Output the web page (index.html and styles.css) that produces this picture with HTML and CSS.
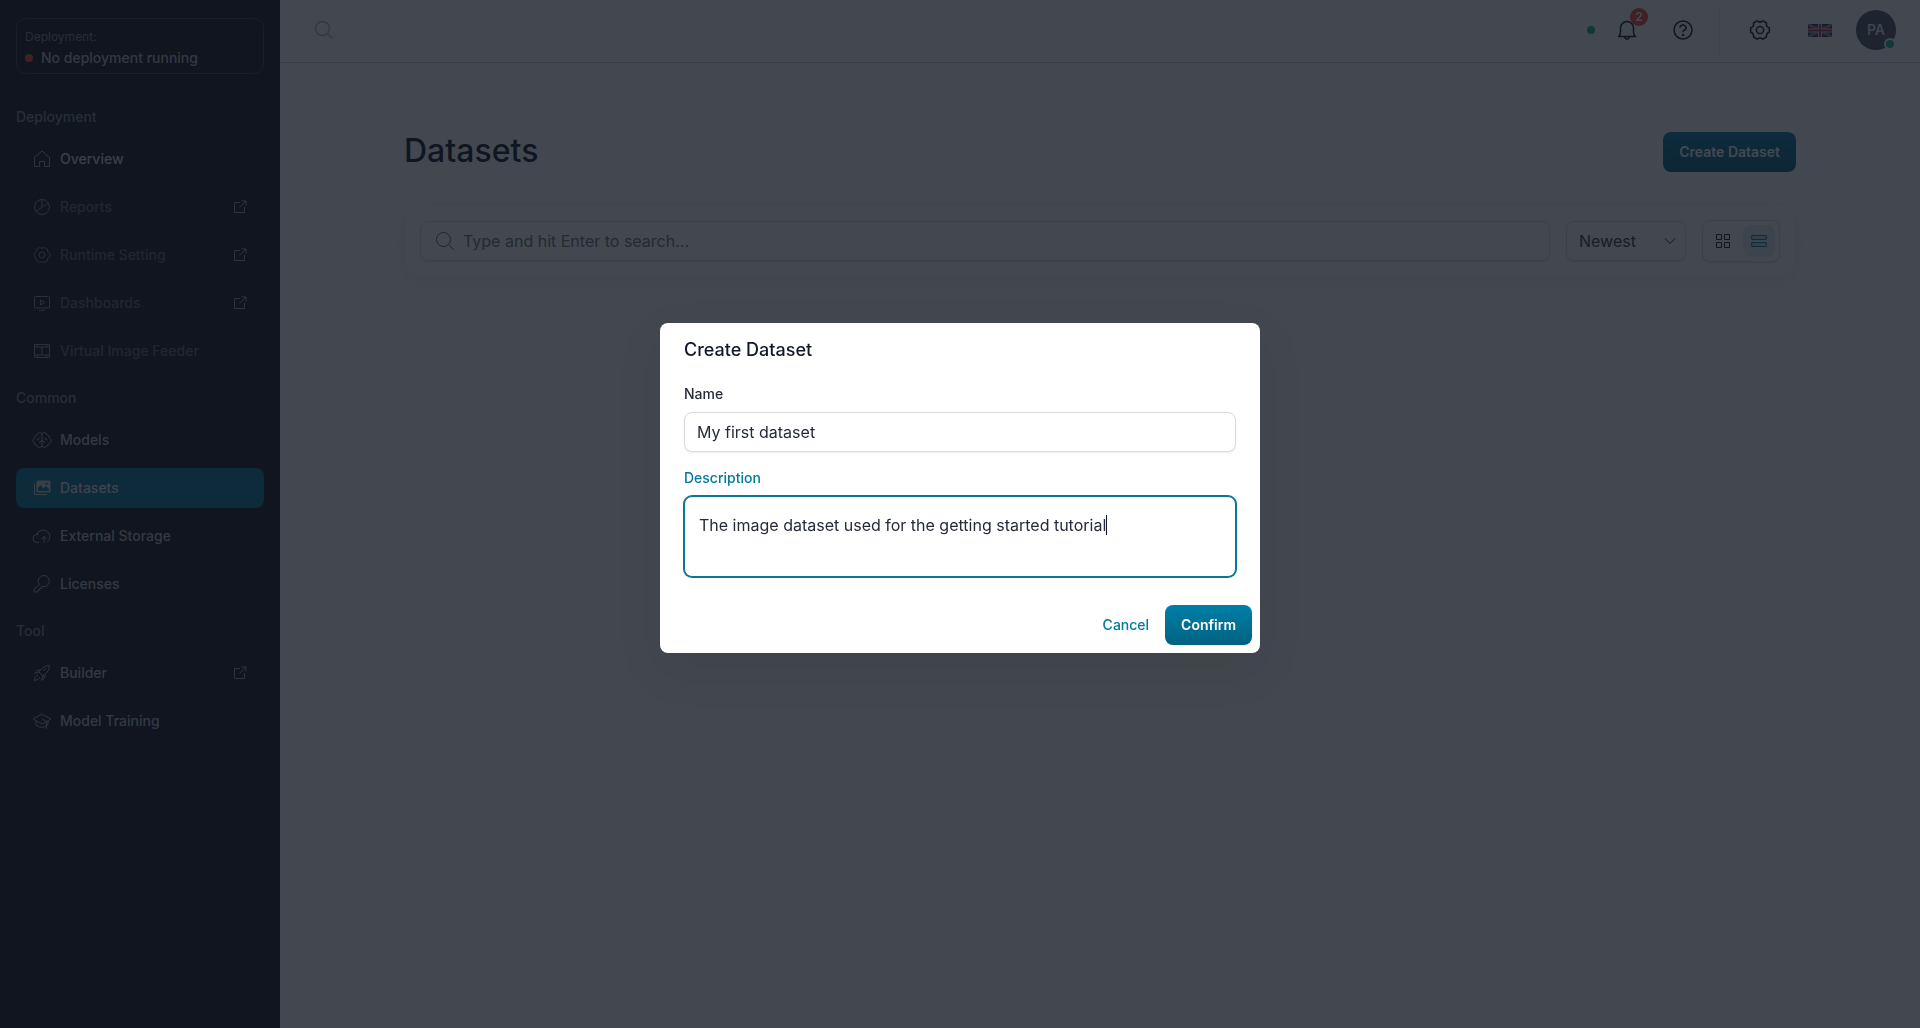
FILE: index.html
```
<!DOCTYPE html>
<html lang="en">
<head>
    <meta charset="UTF-8">
    <meta name="viewport" content="width=device-width, initial-scale=1.0">
    <title>Datasets</title>
    <link rel="stylesheet" href="styles.css">
</head>
<body>
    <svg class="sprite" aria-hidden="true">
        <symbol id="icon-external" viewBox="0 0 14 14">
            <path d="M6 2.500H.5v10h10V7M7.500 1h4.500v4.500M12 1L5.500 7.500"/>
        </symbol>
        <symbol id="icon-search" viewBox="0 0 20 20">
            <circle cx="8.500" cy="8.500" r="7"/>
            <path d="M13.500 13.500l5 5"/>
        </symbol>
        <symbol id="icon-gear" viewBox="-2 -2 24 24">
            <path d="M19.350 7.840V12.160Q15.700 13.300 16.550 17.020L12.810 19.180Q10 16.600 7.190 19.180L3.450 17.020Q4.300 13.300 .65 12.160V7.840Q4.300 6.700 3.450 2.980L7.190 .82Q10 3.400 12.810 .82L16.550 2.980Q15.700 6.700 19.350 7.840Z"/>
            <circle cx="10" cy="10" r="3.600"/>
        </symbol>
    </svg>

    <div class="app">
        <aside class="sidebar">
            <div class="deployment">
                <span class="deployment-label">Deployment:</span>
                <span class="deployment-status"><i class="dot red"></i>No deployment running</span>
            </div>
            <nav>
                <h2 class="nav-title">Deployment</h2>
                <a class="nav-item bright" href="#">
                    <svg class="icon" viewBox="0 0 20 20"><path d="M2.500 8.500L10 2l7.500 6.500V17.500h-5v-5h-5v5h-5z"/></svg>
                    <span>Overview</span>
                </a>
                <a class="nav-item disabled" href="#">
                    <svg class="icon" viewBox="0 0 20 20"><circle cx="10" cy="10" r="7.500"/><path d="M10 2.500V10l-5.700 4.500M10 10l6.500-4"/></svg>
                    <span>Reports</span>
                    <svg class="external"><use href="#icon-external"/></svg>
                </a>
                <a class="nav-item disabled" href="#">
                    <svg class="icon"><use href="#icon-gear"/></svg>
                    <span>Runtime Setting</span>
                    <svg class="external"><use href="#icon-external"/></svg>
                </a>
                <a class="nav-item disabled" href="#">
                    <svg class="icon" viewBox="0 0 20 20"><rect x="2.500" y="3.500" width="15" height="11.500" rx="1"/><path d="M7 17.500h6M8.500 7v5l4-2.500z"/></svg>
                    <span>Dashboards</span>
                    <svg class="external"><use href="#icon-external"/></svg>
                </a>
                <a class="nav-item disabled" href="#">
                    <svg class="icon" viewBox="0 0 20 20"><path d="M2.500 3.500h15v13h-15zM2.500 6h15M2.500 14h15M10 6v8M5.500 3.500V6M14.500 3.500V6M5.500 14v2.500M14.500 14v2.500"/></svg>
                    <span>Virtual Image Feeder</span>
                </a>

                <h2 class="nav-title">Common</h2>
                <a class="nav-item" href="#">
                    <svg class="icon" viewBox="0 0 20 20"><path d="M10 4.500Q9.500 2.500 7.500 2.500T5 5Q2.500 5 2.500 8Q.8 9 .8 10.500T2.500 13Q2.500 15.500 5 15.500Q5.500 17.500 7.500 17.500T10 15.500Q10.500 17.500 12.500 17.500T15 15.500Q17.500 15.500 17.500 13Q19.200 12 19.200 10.500T17.500 8Q17.500 5 15 5Q14.500 2.500 12.500 2.500T10 4.500V15.500M4.500 10Q7 10 7 7.500M10 10.500L7 12.500M10 10.500L13 12.500M15.500 10Q13 10 13 7.500"/></svg>
                    <span>Models</span>
                </a>
                <a class="nav-item active" href="#">
                    <svg class="icon" viewBox="0 0 20 20"><path d="M2.500 5.500V16.500H15"/><path fill="currentColor" stroke="none" fill-rule="evenodd" d="M6 2.500h11a1.500 1.500 0 0 1 1.500 1.500v9a1.500 1.500 0 0 1-1.500 1.500H6A1.500 1.500 0 0 1 4.500 13V4A1.500 1.500 0 0 1 6 2.500zM6 10v3h11v-2l-3-3-2.500 2.500L8.500 7zM14.500 4.500a1.200 1.200 0 1 0 .1 0z"/></svg>
                    <span>Datasets</span>
                </a>
                <a class="nav-item" href="#">
                    <svg class="icon" viewBox="0 0 20 20"><path d="M7 16.500H5a4 4 0 0 1 0-8h1.500M4.800 8.500A6.700 6.700 0 1 1 15.500 15.800M12 17v-6.500M9.500 13L12 10.500l2.500 2.500"/></svg>
                    <span>External Storage</span>
                </a>
                <a class="nav-item" href="#">
                    <svg class="icon" viewBox="0 0 20 20"><path d="M7.500 10.500A5.500 5.500 0 1 1 11 12.500L9.500 12.800V14.500H7.500V16.500H5.500V18H2V15.500z"/><path d="M14 6h.5"/></svg>
                    <span>Licenses</span>
                </a>

                <h2 class="nav-title">Tool</h2>
                <a class="nav-item" href="#">
                    <svg class="icon" viewBox="0 0 20 20"><path d="M17.500 2.500Q11.500 2.500 7 9l4 4Q17.500 8.500 17.500 2.500zM8.500 7Q4.500 6 2.500 10.500L7 9M13 11.500Q14 15.500 9.500 17.500L11 13M14 5.500q-1.500.5-2.500 2.500M6 12q-3 .5-3.500 5.500Q7 17 8 14"/></svg>
                    <span>Builder</span>
                    <svg class="external"><use href="#icon-external"/></svg>
                </a>
                <a class="nav-item" href="#">
                    <svg class="icon" viewBox="0 0 20 20"><path d="M1 8l9-5 9 5-9 5zM4 10v4q6 5 12-.5V9.500M10 8l4.500 2.500V18"/></svg>
                    <span>Model Training</span>
                </a>
            </nav>
        </aside>

        <div class="page">
            <header class="topbar">
                <button class="icon-button search-button" aria-label="Search"><svg class="icon"><use href="#icon-search"/></svg></button>
                <div class="topbar-right">
                    <div class="topbar-group">
                        <i class="dot green"></i>
                        <button class="icon-button bell" aria-label="Notifications">
                            <svg class="icon" viewBox="0 0 20 20"><path d="M1.500 16.500c1.500-1 2-2.500 2-4.500V8a6.500 6.500 0 0 1 13 0v4c0 2 .5 3.500 2 4.500zM8 17q0 2 2 2t2-2"/></svg>
                            <span class="badge">2</span>
                        </button>
                        <button class="icon-button" aria-label="Help">
                            <svg class="icon" viewBox="0 0 20 20"><circle cx="10" cy="10" r="9"/><path d="M7 7.800a3 2.700 0 1 1 4.500 2.200Q10 10.700 10 12.300"/><circle cx="10" cy="15" r=".5"/></svg>
                        </button>
                    </div>
                    <div class="topbar-group settings">
                        <button class="icon-button" aria-label="Settings"><svg class="icon large"><use href="#icon-gear"/></svg></button>
                        <button class="icon-button" aria-label="Language">
                            <svg class="flag" viewBox="0 0 24 13"><path fill="#3a3f7c" d="M0 0h24v13H0z"/><path stroke="#cfd0dd" stroke-width="2" d="M0 0l24 13M24 0L0 13"/><path stroke="#c8324a" d="M0 0l24 13M24 0L0 13"/><path stroke="#cfd0dd" stroke-width="4" d="M12 0v13M0 6.500h24"/><path stroke="#c8324a" stroke-width="2" d="M12 0v13M0 6.500h24"/></svg>
                        </button>
                    </div>
                    <button class="avatar">PA<i class="dot green"></i></button>
                </div>
            </header>

            <main class="content">
                <div class="page-head">
                    <h1>Datasets</h1>
                    <button class="button primary">Create Dataset</button>
                </div>
                <div class="filters">
                    <label class="search">
                        <svg class="icon"><use href="#icon-search"/></svg>
                        <input type="text" placeholder="Type and hit Enter to search..." aria-label="Search datasets">
                    </label>
                    <div class="sort">
                        <select aria-label="Sort order">
                            <option>Newest</option>
                            <option>Oldest</option>
                        </select>
                        <svg class="chevron" viewBox="0 0 12 12"><path d="M1 3.500l5 5 5-5"/></svg>
                    </div>
                    <div class="view-toggle">
                        <button aria-label="Grid view"><svg viewBox="0 0 16 16"><path d="M1.500 1.500h5v5h-5zM9.500 1.500h5v5h-5zM1.500 9.500h5v5h-5zM9.500 9.500h5v5h-5z"/></svg></button>
                        <button class="selected" aria-label="List view"><svg viewBox="0 0 16 16"><path d="M.7 2.500h14.600v4H.7zM.7 9.500h14.600v4H.7z"/></svg></button>
                    </div>
                </div>
            </main>
        </div>
    </div>

    <div class="backdrop">
        <form class="modal" role="dialog" aria-labelledby="modal-title">
            <h2 id="modal-title">Create Dataset</h2>
            <div class="field">
                <label for="name">Name</label>
                <input type="text" id="name" value="My first dataset">
            </div>
            <div class="field focused">
                <label for="description">Description</label>
                <div class="textarea-wrap">
                    <textarea id="description" autofocus>The image dataset used for the getting started tutorial</textarea>
                    <i class="caret"></i>
                </div>
            </div>
            <div class="modal-actions">
                <button type="button" class="button text">Cancel</button>
                <button type="submit" class="button primary">Confirm</button>
            </div>
        </form>
    </div>
</body>
</html>
```
FILE: styles.css
```
* {
    box-sizing: border-box;
}
body {
    margin: 0;
    background-color: #fff;
    color: #111827;
    font-family: Inter, 'Liberation Sans', sans-serif;
    font-size: 14px;
    line-height: 20px;
}
button, input, select, textarea {
    font: inherit;
    color: inherit;
}
button {
    border: none;
    background: none;
    padding: 0;
    cursor: pointer;
}
h1, h2 {
    margin: 0;
}
svg {
    fill: none;
    stroke: currentColor;
    stroke-linejoin: round;
    flex-shrink: 0;
}
.sprite {
    display: none;
}
.icon {
    width: 20px;
    height: 20px;
}
.icon.large {
    width: 24px;
    height: 24px;
}
.dot {
    width: 8px;
    height: 8px;
    border-radius: 50%;
}
.dot.red {
    background-color: #f04438;
}
.dot.green {
    background-color: #10b981;
}
.app {
    display: flex;
    min-height: 100vh;
}

/* sidebar */
.sidebar {
    width: 280px;
    flex-shrink: 0;
    padding: 18px 16px;
    background-color: #111520;
    color: #b4bac4;
}
.deployment {
    display: flex;
    flex-direction: column;
    height: 56px;
    padding: 8px;
    border: 1px solid #3a404c;
    border-radius: 10px;
    margin-bottom: 33px;
}
.deployment-label {
    font-size: 12px;
    color: #7d8490;
}
.deployment-status {
    display: flex;
    align-items: center;
    gap: 8px;
    line-height: 22px;
    font-weight: 500;
}
.nav-title {
    margin: 17px 0 12px;
    font-size: 14px;
    font-weight: 500;
    color: #7d8490;
}
.nav-item {
    display: flex;
    align-items: center;
    gap: 8px;
    height: 40px;
    padding: 0 16px;
    border-radius: 8px;
    margin-bottom: 8px;
    color: inherit;
    font-weight: 500;
    text-decoration: none;
}
.nav-item span {
    flex: 1;
}
.nav-item .icon {
    color: #9da4ae;
}
.nav-item .external {
    width: 14px;
    height: 14px;
    color: #9da4ae;
}
.nav-item.bright {
    color: #d2d6db;
}
.nav-item.disabled {
    color: #5c6370;
}
.nav-item.disabled .icon {
    color: #8b919c;
}
.nav-item.active {
    background-color: #007a9e;
    color: #e5e7eb;
}
.nav-item.active .icon {
    color: #d2d6db;
}

/* top bar */
.page {
    flex: 1;
    min-width: 0;
}
.topbar {
    display: flex;
    align-items: center;
    justify-content: space-between;
    height: 63px;
    padding: 0 24px 2px;
    border-bottom: 1px solid #d2d6db;
}
.topbar-right,
.topbar-group {
    display: flex;
    align-items: center;
    gap: 16px;
}
.topbar-group .dot {
    margin-right: -4px;
}
.topbar-group.settings {
    gap: 20px;
    height: 48px;
    padding-left: 20px;
    border-left: 1px solid #e5e7eb;
}
.icon-button {
    display: flex;
    align-items: center;
    justify-content: center;
    position: relative;
    width: 40px;
    height: 40px;
}
.icon-button .icon {
    stroke-width: 1.5;
}
.icon-button.search-button {
    color: #b4bac4;
}
.badge {
    position: absolute;
    top: -2px;
    right: -1px;
    width: 18px;
    height: 18px;
    border-radius: 9px;
    background-color: #f04438;
    color: #fff;
    font-size: 12px;
    font-weight: 600;
    line-height: 18px;
}
.flag {
    width: 24px;
    height: 13px;
}
.avatar {
    position: relative;
    width: 40px;
    height: 40px;
    border-radius: 50%;
    background-color: #4d566b;
    color: #e5e7eb;
    font-weight: 600;
}
.avatar .dot {
    position: absolute;
    right: 0;
    bottom: 0;
    width: 12px;
    height: 12px;
    border: 2px solid #fff;
}

/* content */
.content {
    max-width: 1440px;
    margin: 0 auto;
    padding: 69px 24px;
}
.page-head {
    display: flex;
    align-items: center;
    justify-content: space-between;
    margin-bottom: 32px;
}
h1 {
    padding-bottom: 2px;
    font-size: 32px;
    font-weight: 500;
    line-height: 38px;
}
.button {
    height: 40px;
    padding: 0 16px;
    border-radius: 8px;
    font-weight: 600;
}
.button.primary {
    background: linear-gradient(#007fa8, #006280);
    color: #fff;
}
.button.text {
    color: #007a9e;
    font-weight: 500;
}
.filters {
    display: flex;
    align-items: center;
    gap: 16px;
    padding: 16px;
    border-radius: 20px;
    box-shadow: 0 5px 22px rgba(17, 24, 39, 0.05), 0 0 0 1px rgba(17, 24, 39, 0.04);
}
.search,
.sort {
    height: 40px;
    border: 1px solid #d8dbe0;
    border-radius: 8px;
    box-shadow: 0 1px 2px rgba(17, 24, 39, 0.1);
}
.search {
    display: flex;
    align-items: center;
    flex: 1;
    gap: 8px;
    padding: 0 14px;
    color: #6c737f;
}
.search .icon {
    color: #4d5461;
}
.search input {
    flex: 1;
    border: none;
    outline: none;
    background: none;
    padding: 0;
    font-size: 16px;
}
.search input::placeholder {
    color: #6c737f;
}
.sort {
    position: relative;
    width: 120px;
}
.sort select {
    appearance: none;
    width: 100%;
    height: 100%;
    padding: 0 12px;
    border: none;
    background: none;
    color: #2f3746;
    font-size: 16px;
}
.chevron {
    position: absolute;
    top: 13px;
    right: 9px;
    width: 12px;
    height: 12px;
    pointer-events: none;
}
.view-toggle {
    display: flex;
    gap: 4px;
    padding: 4px;
    border: 1px solid #d8dbe0;
    border-radius: 8px;
    box-shadow: 0 1px 2px rgba(17, 24, 39, 0.1);
}
.view-toggle button {
    display: flex;
    align-items: center;
    justify-content: center;
    width: 32px;
    height: 32px;
    border-radius: 8px;
}
.view-toggle svg {
    width: 16px;
    height: 16px;
}
.view-toggle .selected {
    background-color: #e6f0f4;
    color: #007a9e;
}
.view-toggle .selected svg {
    fill: #c0dfe9;
}

/* create dataset dialog */
.backdrop {
    display: flex;
    align-items: center;
    justify-content: center;
    position: fixed;
    inset: 0;
    padding: 0 24px 52px;
    background-color: rgba(17, 21, 32, 0.79);
}
.modal {
    width: 600px;
    border-radius: 8px;
    background-color: #fff;
    box-shadow: 0 16px 48px rgba(0, 0, 0, 0.08);
}
.modal h2 {
    padding: 16px 24px;
    font-size: 18px;
    font-weight: 500;
    line-height: 22px;
}
.field {
    display: flex;
    flex-direction: column;
    gap: 8px;
    padding: 7px 24px 9px;
}
.field label {
    font-weight: 500;
    color: #252b38;
}
.field input,
.field textarea {
    width: 100%;
    border: 1px solid #d8dbe0;
    border-radius: 8px;
    outline: none;
    color: #252b38;
    font-size: 16px;
}
.field input {
    height: 40px;
    padding: 0 12px;
    box-shadow: 0 1px 2px rgba(17, 24, 39, 0.08);
}
.field textarea {
    display: block;
    height: 81px;
    padding: 16px 14px;
    line-height: 24px;
    resize: none;
    caret-color: transparent;
}
.field.focused label {
    color: #007a9e;
}
.field.focused textarea {
    border-color: #0b7697;
    box-shadow: 0 0 0 1px #0b7697;
}
.textarea-wrap {
    position: relative;
}
/* text cursor at the end of the description */
.caret {
    position: absolute;
    top: 19px;
    left: 422px;
    width: 1px;
    height: 20px;
    background-color: #111827;
}
.modal-actions {
    display: flex;
    justify-content: flex-end;
    padding: 19px 8px 8px;
}
```
